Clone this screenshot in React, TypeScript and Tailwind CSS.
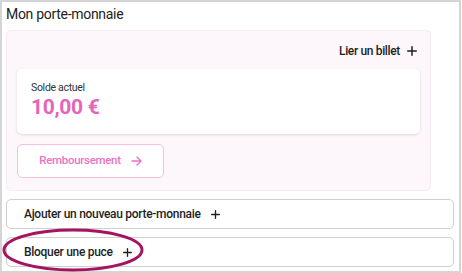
import React from "react";

function PlusIcon({ size = 10 }: { size?: number }) {
  return (
    <svg width={size} height={size} viewBox="0 0 10 10" fill="none" stroke="#1f1f1f" strokeWidth={1.5} strokeLinecap="round">
      <path d="M5 0.75v8.5M0.75 5h8.5" />
    </svg>
  );
}

function ArrowRight() {
  return (
    <svg width="11" height="10" viewBox="0 0 11 10" fill="none" stroke="#ec72c4" strokeWidth={1.4} strokeLinecap="round" strokeLinejoin="round">
      <path d="M1 5h9M6 1l4 4-4 4" />
    </svg>
  );
}

export default function App() {
  return (
    <div className="relative w-[461px] h-[273px] border-2 border-[#d5d5d5] bg-white pt-px px-[4px] font-['Roboto',sans-serif] text-[#222]">
      <h2 className="text-[14px] leading-[22px] tracking-[-0.3px]">Mon porte-monnaie</h2>

      {/* wallet panel */}
      <div className="mt-[5px] w-[425px] h-[161px] rounded-[5px] border border-[#f7ebf3] bg-[#fdf6fb] px-[10px] pt-[10px] flex flex-col">
        <div className="flex justify-end items-center h-[20px] pr-[3px] gap-[7px] text-[12px] tracking-[-0.35px] font-medium text-[#1f1f1f]">
          <span>Lier un billet</span>
          <PlusIcon />
        </div>

        <div className="mt-[8px] h-[65px] rounded-[5px] bg-white shadow-[0_1px_3px_rgba(0,0,0,0.12)] pl-[14px] pt-[12px]">
          <p className="text-[10.5px] leading-[14px] tracking-[-0.3px] text-[#333]">Solde actuel</p>
          <p className="text-[21px] leading-[24px] tracking-[-0.3px] font-bold text-[#e564ba]">10,00 €</p>
        </div>

        <button className="mt-[10px] h-[34px] w-[147px] border border-[#f6bfe0] rounded-[5px] bg-white flex items-center justify-center gap-[10px] text-[#ec72c4] text-[11.5px] tracking-[-0.3px] font-medium">
          <span>Remboursement</span>
          <ArrowRight />
        </button>
      </div>

      <div className="mt-[8px] h-[30px] w-[448px] border border-[#cfcfcf] rounded-[5px] flex items-center pl-[17px] gap-[10px] text-[12px] tracking-[-0.3px] font-medium text-[#1f1f1f]">
        <span>Ajouter un nouveau porte-monnaie</span>
        <PlusIcon size={9} />
      </div>

      <div className="mt-[8px] h-[30px] w-[448px] border border-[#cfcfcf] rounded-[5px] flex items-center pl-[17px] gap-[10px] text-[12px] tracking-[-0.3px] font-medium text-[#1f1f1f]">
        <span>Bloquer une puce</span>
        <PlusIcon size={9} />
      </div>

      {/* annotation ring */}
      <svg className="absolute left-0 top-[222px] pointer-events-none" width="150" height="52" viewBox="0 0 150 52" fill="none">
        <ellipse cx="71" cy="26" rx="69" ry="20" stroke="#a5155f" strokeWidth="3" />
      </svg>
    </div>
  );
}
